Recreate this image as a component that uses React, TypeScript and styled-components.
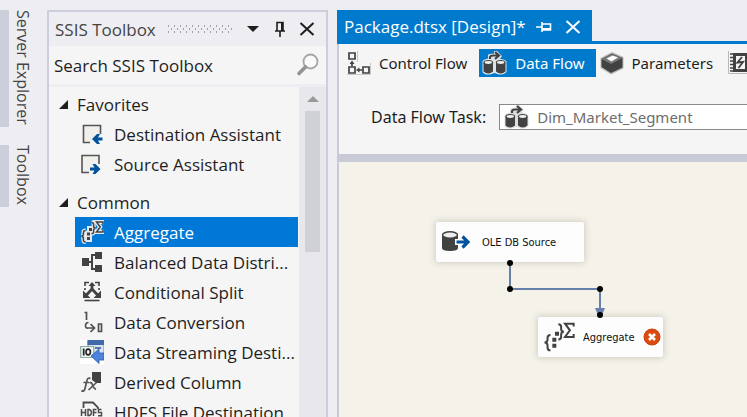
import React from 'react';
import styled, { createGlobalStyle, css } from 'styled-components';

const GlobalStyle = createGlobalStyle`
  *, *::before, *::after { box-sizing: border-box; }
  body {
    margin: 0;
    overflow: hidden;
    background: #eeeef2;
    color: #1e1e1e;
    font-family: 'Open Sans', 'Noto Sans', sans-serif;
    font-size: 17px;
  }
  button, input, select { font: inherit; color: inherit; }
  h2 { margin: 0; font: inherit; }
  svg { display: block; flex: none; }
`;

const Shell = styled.div`
  display: flex;
  height: 100vh;
  padding-top: 10px;
  overflow: hidden;
`;

const SideRail = styled.nav`
  display: flex;
  flex-direction: column;
  gap: 18px;
  flex: 0 0 47px;
`;

const RailTab = styled.button`
  align-self: flex-start;
  writing-mode: vertical-rl;
  white-space: nowrap;
  padding: 0 2px 2px 0;
  border: 0;
  border-left: 9px solid #cccedb;
  background: transparent;
  color: #444;
  width: 38px;
  font-size: 16px;
  line-height: 24px;
  text-align: left;
`;

const Toolbox = styled.aside`
  display: flex;
  flex-direction: column;
  flex: 0 0 281px;
  margin-right: 9px;
  border: 2px solid #cccedb;
  border-bottom: 0;
  background: #f5f5f5;
`;

const TitleBar = styled.header`
  display: flex;
  align-items: center;
  height: 34px;
  flex: none;
  padding: 0 6px;
  background: #eeeef2;
  color: #444;
`;

const Grip = styled.svg`
  margin-left: 12px;
`;

const IconButton = styled.button`
  display: flex;
  align-items: center;
  justify-content: center;
  flex: none;
  width: 27px;
  height: 24px;
  padding: 0;
  border: 0;
  background: transparent;
`;

const TitleActions = styled.div`
  display: flex;
  margin-left: auto;
  color: #1e1e1e;
`;

const SearchBar = styled.label`
  display: flex;
  align-items: center;
  height: 41px;
  flex: none;
  padding: 0 6px 0 5px;
  border-bottom: 3px solid #eeeef2;
`;

const SearchInput = styled.input`
  flex: 1;
  min-width: 0;
  padding: 0;
  border: 0;
  outline: 0;
  background: transparent;
  &::placeholder { color: #1e1e1e; opacity: 1; }
`;

const ListArea = styled.div`
  display: flex;
  flex: 1;
  min-height: 0;
`;

const List = styled.div`
  flex: 1;
  min-width: 0;
  overflow: hidden;
  padding-top: 2px;
`;

const Group = styled.section`
  padding-bottom: 8px;
`;

const GroupHeader = styled.button`
  display: flex;
  align-items: center;
  gap: 9px;
  width: 100%;
  height: 30px;
  padding: 0 0 0 10px;
  border: 0;
  background: transparent;
  text-align: left;
`;

const Item = styled.button<{ $selected?: boolean }>`
  display: flex;
  align-items: center;
  gap: 10px;
  width: calc(100% - 27px);
  height: 30px;
  margin-left: 26px;
  padding: 0 0 0 5px;
  border: 0;
  background: transparent;
  text-align: left;
  ${(p) => p.$selected && css`
    background: #0078d7;
    color: #fff;
  `}
`;

const ItemLabel = styled.span`
  overflow: hidden;
  white-space: nowrap;
  text-overflow: ellipsis;
`;

const ScrollTrack = styled.div`
  display: flex;
  flex-direction: column;
  align-items: center;
  flex: 0 0 27px;
  background: #e8e8ec;
`;

const ScrollThumb = styled.div`
  width: 15px;
  height: 141px;
  background: #d0d1d7;
`;

const Editor = styled.main`
  display: flex;
  flex-direction: column;
  flex: 1;
  min-width: 0;
`;

const DocumentTabs = styled.header`
  display: flex;
  flex: none;
  border-bottom: 3px solid #007acc;
`;

const DocumentTab = styled.div`
  display: flex;
  align-items: center;
  gap: 2px;
  height: 31px;
  padding: 2px 5px 0 7px;
  background: #007acc;
  color: #fff;
  white-space: nowrap;
`;

const TabTitle = styled.span`
  margin-right: 3px;
`;

const Designer = styled.div`
  display: flex;
  flex-direction: column;
  flex: 1;
  min-height: 0;
  border-left: 2px solid #c8cad8;
  background: #f5f5f5;
  font-family: 'Noto Sans', 'Open Sans', sans-serif;
`;

const ViewTabs = styled.nav`
  display: flex;
  gap: 1px;
  flex: none;
  height: 33px;
  padding: 5px 0 0 5px;
  overflow: hidden;
`;

const ViewTab = styled.button<{ $active?: boolean }>`
  display: flex;
  align-items: center;
  gap: 8px;
  flex: none;
  height: 28px;
  padding: 0 11px 0 3px;
  border: 0;
  background: ${(p) => (p.$active ? '#007acc' : 'transparent')};
  color: ${(p) => (p.$active ? '#fff' : '#1e1e1e')};
  font-size: 15px;
  white-space: nowrap;
`;

const TaskBar = styled.div`
  display: flex;
  align-items: center;
  gap: 13px;
  flex: none;
  height: 85px;
  padding-left: 32px;
  padding-top: 3px;
  border-bottom: 8px solid #c8cad8;
  font-size: 15px;
  white-space: nowrap;
`;

const TaskLabel = styled.label`
  font-size: 16px;
`;

const TaskPicker = styled.div`
  display: flex;
  align-items: center;
  gap: 8px;
  flex: 1;
  height: 26px;
  padding-left: 4px;
  border: 1px solid #8a8a8a;
  border-right: 0;
  background: #fff;
`;

const TaskSelect = styled.select`
  appearance: none;
  flex: 1;
  min-width: 0;
  padding: 0;
  border: 0;
  outline: 0;
  background: transparent;
  color: #6d6d6d;
`;

const Canvas = styled.div`
  position: relative;
  flex: 1;
  min-height: 0;
  overflow: hidden;
  background: #f5f2e9;
`;

const Edges = styled.svg`
  position: absolute;
  inset: 0;
  width: 100%;
  height: 100%;
`;

const Node = styled.div<{ $x: number; $y: number; $w: number; $gap: number }>`
  position: absolute;
  left: ${(p) => p.$x}px;
  top: ${(p) => p.$y}px;
  width: ${(p) => p.$w}px;
  height: 40px;
  display: flex;
  align-items: center;
  gap: ${(p) => p.$gap}px;
  padding: 0 3px 0 5px;
  border-radius: 2px;
  background: #fdfdfe;
  box-shadow: 0 0 6px 1px #cfccc4;
  color: #111;
  font-family: 'DejaVu Sans Condensed', 'DejaVu Sans', sans-serif;
  font-stretch: condensed;
  font-size: 11px;
  white-space: nowrap;
`;

const NodeLabel = styled.span`
  flex: 1;
`;

const ink = '#424242';

const BoxIcon = ({ out }: { out?: boolean }) => (
  <svg width="24" height="24" viewBox="0 0 24 24" fill="none">
    <path d={out ? 'M9 20.5H2V3.5H19V12' : 'M10 20.5H3.5V3.5H20.5V12'} fill="#f0efec" stroke="#555" strokeWidth="1.6" />
    {out
      ? <path d="M10 15.500H14.500L12.500 12H15.500L20.500 17L15.500 22H12.500L14.500 18.500H10Z" fill="#00539c" />
      : <path d="M22.500 15.500H18L20 12H17L12 17L17 22H20L18 18.500H22.500Z" fill="#00539c" />}
  </svg>
);

const AggregateIcon = ({ size = 24, halo = false }: { size?: number; halo?: boolean }) => {
  const braces = 'M5.6 10.5Q3.4 10.500 3.4 12.700V14Q3.4 16 1.200 16.200Q3.4 16.400 3.4 18.400V20Q3.4 22 5.600 22M11.500 2.500Q13.600 2.500 13.600 4.500V6Q13.600 7.900 15.600 8.100Q13.600 8.300 13.600 10.200V11.800Q13.600 13.800 11.500 13.800';
  const sigma = 'M23 4.200V2H16.500L20.200 7L16.500 12H23V9.800';
  const dots = 'M7 12.500h3v3H7zM7 17h3v3H7zM9 8h3v3H9z';
  return (
    <svg width={size} height={size} viewBox="0 0 24 24" fill="none">
      {halo && <path d={`${braces}${sigma}${dots}`} stroke="#e4e8ec" strokeWidth="4" />}
      <path d={braces} stroke={ink} strokeWidth="1.500" />
      <path d={sigma} stroke={ink} strokeWidth="1.500" />
      <path d={dots} fill={ink} />
    </svg>
  );
};

const BalancedIcon = () => (
  <svg width="24" height="24" viewBox="0 0 24 24" fill={ink}>
    <path d="M2 8h7v8H2zM15 2h7v7h-7zM15 15h7v7h-7z" />
    <path d="M9 12h3M16 5h-4v14h4" fill="none" stroke={ink} strokeWidth="2" />
  </svg>
);

const SplitIcon = () => (
  <svg width="24" height="24" viewBox="0 0 24 24" fill="none" stroke={ink}>
    <path d="M5 6V2.5H9M15 2.5H19V6M5 8v2M19 8v2" strokeWidth="1.6" />
    <path d="M12 4v6M12 9L5.5 16M12 9l6.500 7" strokeWidth="2.8" />
    <path d="M8.500 6L12 2L15.500 6zM3 10.500v7.500h7.500zM21 10.500v7.500h-7.500z" fill={ink} stroke="none" />
    <path d="M4.500 20.500h15" strokeWidth="1.600" />
  </svg>
);

const ConversionIcon = () => (
  <svg width="24" height="24" viewBox="0 0 24 24" fill="none" stroke="#505050" strokeWidth="1.700">
    <path d="M4.500 2.500H6.500V10M8.500 12.500Q5.500 12.500 5.500 15.500T8 18H14M10.500 14L14.500 18L10.500 22M18.500 14h3v7.500h-3z" />
  </svg>
);

const StreamingIcon = () => (
  <svg width="24" height="24" viewBox="0 0 24 24">
    <path fill="#fff" d="M0 0h24v24H0z" />
    <path d="M8 1h16v14H8z" fill="#d9e4f1" stroke="#6d8fb8" />
    <path d="M7.500 0H24v5H7.500z" fill="#4169aa" />
    <path d="M.7 6.500h13v11H.7z" fill="#eff6f3" stroke="#8eaaa2" strokeWidth="1.200" />
    <path d="M3.700 8.500v7" stroke="#222" strokeWidth="1.700" />
    <ellipse cx="8.200" cy="12" rx="2.200" ry="2.900" fill="none" stroke="#222" strokeWidth="1.600" />
    <path d="M15 8h6" stroke="#5a78a8" strokeWidth="2" />
    <path d="M11 16L19 9V13H24V20H19V23.500Z" fill="#4c83dc" stroke="#2b5bb0" strokeWidth=".8" />
  </svg>
);

const DerivedIcon = () => (
  <svg width="24" height="24" viewBox="0 0 24 24" fill="none">
    <path d="M12 2h9v11h-5l-4-3z" fill={ink} />
    <path d="M10.500 8.500Q7.500 7 6.800 11L5 18.500Q4 22.500 1.500 20.500M3.500 12.500H9" stroke="#555" strokeWidth="1.700" />
    <path d="M9.500 13Q11.500 11.500 12.500 15T16 19.500M16.500 12.500L8.500 20" stroke="#555" strokeWidth="1.700" />
  </svg>
);

const HdfsIcon = () => (
  <svg width="24" height="24" viewBox="0 0 24 24" fill="none" stroke="#4b4b4b">
    <path d="M3.500 8V2.500H13L18 7.500V9" strokeWidth="1.800" />
    <path d="M1.500 9v7M5.500 9v7M1.500 12.500h4M8 9.500v6h1.500q2-1 2-3t-2-3zM13.500 16V9.500H16.500M13.500 12.500h3M21.500 9.500H18.500v3h3v3.200h-3.500" strokeWidth="1.500" />
    <path d="M4 18.500v4h14v-4" strokeWidth="1.600" />
  </svg>
);

const ControlFlowIcon = () => (
  <svg width="24" height="24" viewBox="0 0 24 24" fill="none" stroke={ink} strokeWidth="1.700">
    <path d="M10.500 0V11M0 23.500H23.500V12" stroke="#c9c9c9" strokeWidth="1" />
    <path d="M2 2h6v6H2zM2 16h6v6H2zM16 16h6v6h-6zM5 11.500V15M11 19h4" />
    <path d="M5 9.500L2.500 13h5zM9 19l3.500-2.500v5z" fill={ink} stroke="none" />
  </svg>
);

const DataFlowIcon = ({ halo }: { halo?: boolean }) => (
  <svg width="25" height="24" viewBox="0 0 25 24" fill={ink}>
    <path
      d="M.5 10Q2 8 6 7.500V4Q7 2.500 12 2.500V0H15L20 5L18 8Q23 8 24.500 10.500V21Q22 24 17 23.500L12.500 22L8 23.500Q2 24 .5 21Z"
      fill={halo ? '#dce4ea' : '#dedede'}
    />
    <path d="M1.500 11.500v9q4.700 4 9.500 0v-9zM14 11.500v9q4.700 4 9.500 0v-9z" />
    <ellipse cx="6.300" cy="11.500" rx="4.300" ry="2" fill="#eee" stroke={ink} strokeWidth="1.200" />
    <ellipse cx="18.700" cy="11.500" rx="4.300" ry="2" fill="#eee" stroke={ink} strokeWidth="1.200" />
    <path d="M8 8V6Q8.500 4.500 11 4.500H16.500M13 1L17 4.500L13 8" fill="none" stroke={ink} strokeWidth="2.200" />
  </svg>
);

const ParametersIcon = () => (
  <svg width="24" height="24" viewBox="0 0 24 24">
    <path d="M12 1L23.500 6V17.500L11 23.500L.5 17V7Z" fill="#b9b9b9" />
    <path d="M12 2.500L22.500 7V16.500L11 22L1.500 16V8Z" fill={ink} />
    <path d="M1.500 8L12 3L22.500 7L11 13Z" fill="#777" />
    <path d="M6.500 7.500L12.500 4.500L18 6.500L11.500 10.500Z" fill="#fff" />
  </svg>
);

const EventsIcon = () => (
  <svg width="24" height="24" viewBox="0 0 24 24" fill="none">
    <path d="M.5 0V22.500H20" stroke="#b8b8b8" />
    <path d="M6.500 3.500h12v16h-12z" fill="#f5f5f5" stroke={ink} strokeWidth="3" />
    <path d="M2 3h4M2 6.500h4M2 10h4M2 13.500h4M2 17h4M2 20h4" stroke={ink} strokeWidth="1.300" />
    <path d="M14 6L9.500 11.500L15 11L10.500 17" stroke={ink} strokeWidth="1.900" />
  </svg>
);

const DbSourceIcon = () => (
  <svg width="30" height="24" viewBox="0 0 30 24">
    <path d="M1 5v13q0 3 8 3t8-3V5z" fill={ink} />
    <ellipse cx="9" cy="5" rx="7.500" ry="3.200" fill="#eee" stroke={ink} strokeWidth="1.400" />
    <path d="M14 12H27M21.500 6.500L27 12L21.500 17.500" fill="none" stroke="#fff" strokeWidth="6" />
    <path d="M15.500 12H27M21.500 6.500L27 12L21.500 17.500" fill="none" stroke="#00539c" strokeWidth="3.200" />
  </svg>
);

const ErrorIcon = () => (
  <svg width="18" height="18" viewBox="0 0 18 18" role="img" aria-label="Error">
    <circle cx="9" cy="9" r="8" fill="#dc4a10" stroke="#c63f0c" />
    <path d="M6 6l6 6M12 6l-6 6" stroke="#fff" strokeWidth="2.600" />
  </svg>
);

const CloseIcon = () => (
  <svg width="16" height="14" viewBox="0 0 16 14" fill="none" stroke="currentColor" strokeWidth="2">
    <path d="M1.500 1L14.500 13M14.500 1L1.500 13" />
  </svg>
);

const PinIcon = ({ sideways }: { sideways?: boolean }) => (
  <svg width="16" height="16" viewBox="0 0 16 16" fill="none" stroke="currentColor" strokeWidth="1.600">
    <g transform={sideways ? 'rotate(90 8 8)' : undefined}>
      <path d="M5 10V1.500H11V10M3 10H13M8 10V16" />
      <path d="M10 1.500V10" strokeWidth="2" />
    </g>
  </svg>
);

const SearchIcon = () => (
  <svg width="24" height="24" viewBox="0 0 24 24" fill="none">
    <circle cx="14.500" cy="8.500" r="7" fill="#fafafa" stroke="#a5a5a5" strokeWidth="1.800" />
    <path d="M9.500 14L3 20.500" stroke="#929292" strokeWidth="3.600" strokeLinecap="round" />
  </svg>
);

const groups = [
  {
    name: 'Favorites',
    items: [
      { label: 'Destination Assistant', icon: <BoxIcon /> },
      { label: 'Source Assistant', icon: <BoxIcon out /> },
    ],
  },
  {
    name: 'Common',
    items: [
      { label: 'Aggregate', icon: <AggregateIcon halo />, selected: true },
      { label: 'Balanced Data Distri...', icon: <BalancedIcon /> },
      { label: 'Conditional Split', icon: <SplitIcon /> },
      { label: 'Data Conversion', icon: <ConversionIcon /> },
      { label: 'Data Streaming Desti...', icon: <StreamingIcon /> },
      { label: 'Derived Column', icon: <DerivedIcon /> },
      { label: 'HDFS File Destination', icon: <HdfsIcon /> },
    ],
  },
];

const handles = [[171, 101], [171, 127], [261, 127], [261, 153]];

export default function App() {
  return (
    <>
      <GlobalStyle />
      <Shell>
        <SideRail>
          <RailTab>Server Explorer</RailTab>
          <RailTab>Toolbox</RailTab>
        </SideRail>

        <Toolbox>
          <TitleBar>
            <h2>SSIS Toolbox</h2>
            <Grip width="66" height="9">
              <defs>
                <pattern id="grip" width="6" height="6" patternUnits="userSpaceOnUse">
                  <path d="M0 0h1v2H0zM3 3h1v2H3z" fill="#a0a0a6" />
                </pattern>
              </defs>
              <rect width="66" height="9" fill="url(#grip)" />
            </Grip>
            <TitleActions>
              <IconButton aria-label="Window options">
                <svg width="12" height="6"><path d="M0 0h12L6 6z" fill="#1e1e1e" /></svg>
              </IconButton>
              <IconButton aria-label="Pin"><PinIcon /></IconButton>
              <IconButton aria-label="Close"><CloseIcon /></IconButton>
            </TitleActions>
          </TitleBar>
          <SearchBar>
            <SearchInput placeholder="Search SSIS Toolbox" aria-label="Search SSIS Toolbox" />
            <SearchIcon />
          </SearchBar>
          <ListArea>
            <List>
              {groups.map((group) => (
                <Group key={group.name}>
                  <GroupHeader aria-expanded="true">
                    <svg width="9" height="9"><path d="M9 0V9H0z" fill="#1e1e1e" /></svg>
                    {group.name}
                  </GroupHeader>
                  {group.items.map((item) => (
                    <Item key={item.label} $selected={'selected' in item}>
                      {item.icon}
                      <ItemLabel>{item.label}</ItemLabel>
                    </Item>
                  ))}
                </Group>
              ))}
            </List>
            <ScrollTrack>
              <IconButton aria-label="Scroll up">
                <svg width="12" height="6"><path d="M0 6h12L6 0z" fill="#999" /></svg>
              </IconButton>
              <ScrollThumb />
            </ScrollTrack>
          </ListArea>
        </Toolbox>

        <Editor>
          <DocumentTabs>
            <DocumentTab>
              <TabTitle>Package.dtsx [Design]*</TabTitle>
              <IconButton aria-label="Keep open"><PinIcon sideways /></IconButton>
              <IconButton aria-label="Close document"><CloseIcon /></IconButton>
            </DocumentTab>
          </DocumentTabs>
          <Designer>
            <ViewTabs>
              <ViewTab><ControlFlowIcon />Control Flow</ViewTab>
              <ViewTab $active><DataFlowIcon halo />Data Flow</ViewTab>
              <ViewTab><ParametersIcon />Parameters</ViewTab>
              <ViewTab aria-label="Event handlers"><EventsIcon /></ViewTab>
            </ViewTabs>
            <TaskBar>
              <TaskLabel htmlFor="task">Data Flow Task:</TaskLabel>
              <TaskPicker>
                <DataFlowIcon />
                <TaskSelect id="task">
                  <option>Dim_Market_Segment</option>
                </TaskSelect>
              </TaskPicker>
            </TaskBar>
            <Canvas>
              <Node $x={97} $y={60} $w={148} $gap={11}>
                <DbSourceIcon />
                <NodeLabel>OLE DB Source</NodeLabel>
              </Node>
              <Node $x={199} $y={155} $w={125} $gap={8}>
                <AggregateIcon size={32} />
                <NodeLabel>Aggregate</NodeLabel>
                <ErrorIcon />
              </Node>
              <Edges>
                <path d="M171 101V127H261V150" fill="none" stroke="#6680aa" strokeWidth="2" />
                <path d="M256 146h10l-3 7h-4z" fill="#6680aa" />
                {handles.map(([x, y]) => <circle key={`${x}-${y}`} cx={x} cy={y} r="3" />)}
              </Edges>
            </Canvas>
          </Designer>
        </Editor>
      </Shell>
    </>
  );
}
